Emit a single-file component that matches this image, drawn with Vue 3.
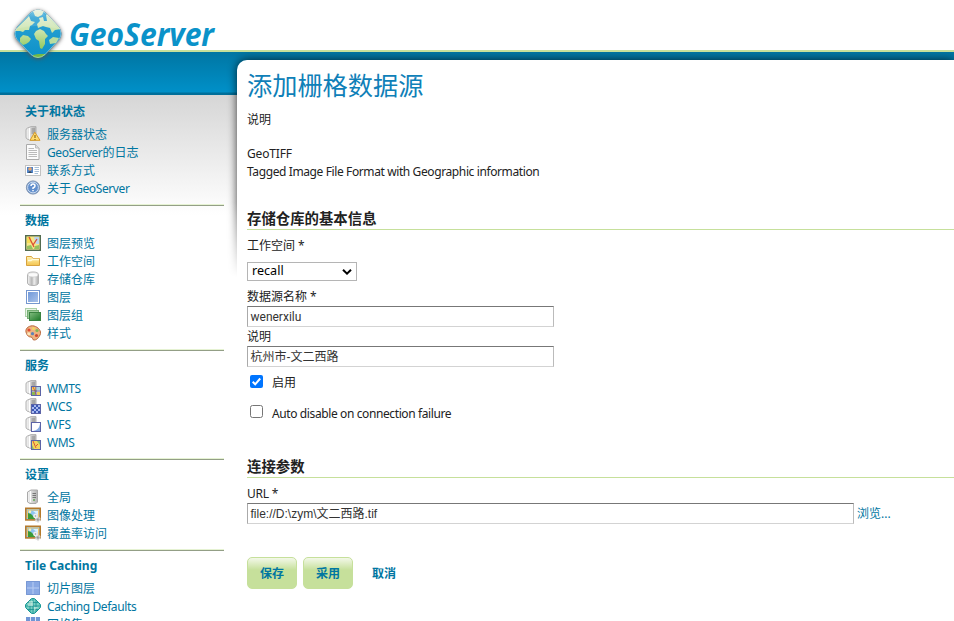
<script setup>
const sections = [
  {
    title: '关于和状态',
    items: [
      { icon: 'status', label: '服务器状态' },
      { icon: 'page', latin: 'GeoServer', label: '的日志' },
      { icon: 'vcard', label: '联系方式' },
      { icon: 'help', label: '关于 ', tail: 'GeoServer' },
    ],
  },
  {
    title: '数据',
    items: [
      { icon: 'map', label: '图层预览' },
      { icon: 'folder', label: '工作空间' },
      { icon: 'database', label: '存储仓库' },
      { icon: 'layer', label: '图层' },
      { icon: 'layers', label: '图层组' },
      { icon: 'palette', label: '样式' },
    ],
  },
  {
    title: '服务',
    items: [
      { icon: 'wmts', latin: 'WMTS' },
      { icon: 'wcs', label: 'WCS' },
      { icon: 'wfs', label: 'WFS' },
      { icon: 'wms', latin: 'WMS' },
    ],
  },
  {
    title: '设置',
    items: [
      { icon: 'server', label: '全局' },
      { icon: 'picture', label: '图像处理' },
      { icon: 'picture', label: '覆盖率访问' },
    ],
  },
  {
    title: 'Tile Caching',
    items: [
      { icon: 'tiles', label: '切片图层' },
      { icon: 'globe', latin: 'Caching Defaults' },
      { icon: 'grid', label: '网格集' },
    ],
  },
]
</script>

<template>
  <div class="page">
    <svg class="defs" width="0" height="0">
      <defs>
        <linearGradient id="gServer" x1="0" x2="1"><stop offset="0" stop-color="#f4f4f4" /><stop offset="1" stop-color="#b4b4b4" /></linearGradient>
        <linearGradient id="gBlue" x1="0" y1="0" x2="1" y2="1"><stop offset="0" stop-color="#7199d9" /><stop offset="1" stop-color="#a9c2ea" /></linearGradient>
        <linearGradient id="gGreen" x1="0" y1="0" x2="1" y2="1"><stop offset="0" stop-color="#82bd80" /><stop offset="1" stop-color="#1c7827" /></linearGradient>
        <linearGradient id="gDb" x1="0" x2="1"><stop offset="0" stop-color="#f8f8f8" /><stop offset=".4" stop-color="#b5b5b5" /><stop offset=".6" stop-color="#eee" /><stop offset="1" stop-color="#aaa" /></linearGradient>
        <linearGradient id="gFolder" x1="0" y1="0" x2="0" y2="1"><stop offset="0" stop-color="#fff3b3" /><stop offset="1" stop-color="#f4c44e" /></linearGradient>
        <linearGradient id="gOcean" x1="0" y1="0" x2="0" y2="1"><stop offset="0" stop-color="#8fd0e8" /><stop offset=".2" stop-color="#2ba1d3" /><stop offset="1" stop-color="#0a90c8" /></linearGradient>
        <linearGradient id="gLand" gradientUnits="userSpaceOnUse" x1="0" y1="10" x2="0" y2="58"><stop offset="0" stop-color="#e6f1dc" /><stop offset=".45" stop-color="#c9e3a9" /><stop offset="1" stop-color="#76bc38" /></linearGradient>
        <clipPath id="logoClip"><path d="M31 12Q38 7 45 12L59 27Q64 34 59 40L45 55Q38 61 31 55L17 40Q12 34 17 27Z" /></clipPath>
        <g id="cabinet">
          <path d="M1 4Q1 2.5 2.5 2L6 .6H11V14.5H6L2 13Q1 12.5 1 11Z" fill="url(#gServer)" stroke="#b0b0b0" />
          <path d="M4.5 2V13.5" stroke="#fff" />
          <path d="M6.5 3H10M6.5 5H10M6.5 7H10" stroke="#8a8a8a" />
        </g>
      </defs>
    </svg>

    <header class="header">
      <svg class="logo" width="225" height="64" viewBox="0 0 225 64">
        <path class="logo-shadow" d="M31 12Q38 7 45 12L59 27Q64 34 59 40L45 55Q38 61 31 55L17 40Q12 34 17 27Z" fill="#666" />
        <g clip-path="url(#logoClip)">
          <rect x="12" y="7" width="52" height="54" fill="url(#gOcean)" />
          <path d="M14 31 29 16 31 21 35 22 32 25 30 26 29 30 25 30 23 32 20 31Z" fill="url(#gLand)" />
          <path d="M33 11 38 9 44 11 42 15 38 17 35 16Z" fill="url(#gLand)" />
          <path d="M20 38 23 35 28 36 31 39 29 42 26 44 23 45 20 42Z" fill="url(#gLand)" />
          <path d="M38 28 37 24 40 21 39 18 43 17 44 21 47 21 46 15 48 14 61 29 55 30 52 33 50 28 46 27 43 26Z" fill="url(#gLand)" />
          <path d="M34 34 36 31 40 29 44 31 46 34 48 36 45 39 45 44 42 49 40 48 39 41 36 39Z" fill="url(#gLand)" />
          <path d="M49 40 53 37 59 38 56 43 50 44Z" fill="#b9dda0" />
          <path d="M33 55 38 54 46 54 40 60 32 60Z" fill="#72b945" />
          <path d="M16 29 34 11Q38 9 42 12L59 29Q36 23 16 29Z" fill="#fff" opacity=".13" />
        </g>
        <path d="M31 12.5Q38 7.5 45 12.5L59 27.5Q63 34 59 39.5L45 54.5Q38 60.5 31 54.5L17 39.5Q13 34 17 27.5Z" fill="none" stroke="#e5f5f8" stroke-width=".7" opacity=".6" />
        <text class="logo-text" x="69" y="46" textLength="145" lengthAdjust="spacingAndGlyphs">GeoServer</text>
      </svg>
    </header>

    <div class="body">
      <aside class="sidebar">
        <nav v-for="s in sections" :key="s.title" class="section">
          <h3>{{ s.title }}</h3>
          <ul>
            <li v-for="i in s.items" :key="i.icon + i.label">
              <svg class="icon" width="16" height="16" viewBox="0 0 16 16" fill="none">
                <template v-if="i.icon === 'status'">
                  <use href="#cabinet" />
                  <path d="M9.8 6.2 15 14.3H5Z" fill="#ffdc70" stroke="#d99b27" stroke-linejoin="round" />
                  <path d="M10 9V12M10 13V14" stroke="#8e6914" stroke-width="1.2" />
                </template>
                <template v-else-if="i.icon === 'page'">
                  <path d="M1.5 .5H10.5L14 4V15.5H1.5Z" fill="#fbfbfb" stroke="#aaa" />
                  <path d="M10.5 .5V4H14" fill="#ddd" stroke="#bbb" />
                  <path d="M3.5 4.5H9M3.5 6.5H12M3.5 8.5H12M3.5 10.5H12M3.5 12.5H12" stroke="#bababa" />
                </template>
                <template v-else-if="i.icon === 'vcard'">
                  <rect x=".5" y="3.5" width="15" height="10" fill="#fff" stroke="#c2c2c2" />
                  <rect x="2" y="5" width="6" height="6" fill="#4e83c9" />
                  <circle cx="5" cy="7" r="1.8" fill="#e6a56e" />
                  <path d="M3 11Q5 7.5 7 11" fill="#345" />
                  <path d="M9.5 5.5H14M9.5 7.5H14M9.5 9.5H14M9.5 11.5H13" stroke="#a6bfd8" />
                </template>
                <template v-else-if="i.icon === 'help'">
                  <circle cx="8" cy="7.5" r="6.6" fill="#628fcd" stroke="#8295b0" />
                  <circle cx="8" cy="7.5" r="5.4" stroke="#d2e0f2" />
                  <path d="M6 6Q6 4 8 4T10 6Q10 7 8 8V9M8 10V11.3" stroke="#fff" stroke-width="1.5" />
                </template>
                <template v-else-if="i.icon === 'map'">
                  <rect x=".7" y=".7" width="14.6" height="14.6" fill="#f6e68a" stroke="#536b50" stroke-width="1.4" />
                  <path d="M2 2H6V8H2Z" fill="#f6dc55" />
                  <path d="M9 2H14V9L11 9Z" fill="#b9d4ef" />
                  <path d="M2 11 6 10 8 14H2ZM10 11 14 10V14H9Z" fill="#95c05f" />
                  <path d="M4 2 9 12M8 10 12 4" stroke="#dc4d35" stroke-width="1.3" />
                </template>
                <template v-else-if="i.icon === 'folder'">
                  <path d="M1.5 12.5V3.5H6.5L8 5.5H14.5V12.5Z" fill="url(#gFolder)" stroke="#d7a23f" />
                  <path d="M3 7.5H6L7.5 6.5H14" stroke="#fffbd9" stroke-width="1.4" />
                </template>
                <template v-else-if="i.icon === 'database'">
                  <path d="M2.5 3.5Q3 1 8 1T13.5 3.5V12Q13 14.5 8 14.5T2.5 12Z" fill="url(#gDb)" stroke="#b2b2b2" />
                  <ellipse cx="8" cy="3.8" rx="5" ry="2.2" fill="#fafafa" stroke="#ccc" stroke-width=".7" />
                </template>
                <template v-else-if="i.icon === 'layer'">
                  <rect x="1.5" y="1.5" width="13" height="13" fill="#fff" stroke="#7597cf" />
                  <rect x="3" y="3" width="10" height="10" fill="url(#gBlue)" />
                </template>
                <template v-else-if="i.icon === 'layers'">
                  <rect x=".5" y="1.5" width="11" height="8" fill="#e7f4e5" stroke="#acd1a8" />
                  <rect x="2.5" y="3.5" width="11" height="8" fill="#9bca98" stroke="#75ae74" />
                  <rect x="4.5" y="5.5" width="11" height="8" fill="url(#gGreen)" stroke="#3a8240" />
                </template>
                <template v-else-if="i.icon === 'palette'">
                  <path d="M1 7C0 3 5 0 9 1S17 6 15 10 11 15 9 15 8 12 6 12 2 11 1 7Z" fill="#eeb380" stroke="#b9683c" />
                  <circle cx="4" cy="5" r="1.6" fill="#e24b32" />
                  <circle cx="8.5" cy="3.5" r="1.5" fill="#f5d75f" />
                  <circle cx="12" cy="5.5" r="1.6" fill="#82b855" />
                  <circle cx="3.8" cy="8.7" r="1.5" fill="#fbe8bd" />
                  <circle cx="7.5" cy="8.7" r="1.6" fill="#5d83b7" />
                  <circle cx="11.5" cy="10.5" r="1.6" fill="#cf4931" />
                </template>
                <template v-else-if="['wmts', 'wcs', 'wfs', 'wms'].includes(i.icon)">
                  <use href="#cabinet" />
                  <rect x="6.5" y="6.5" width="9" height="9" fill="#fff" stroke="#5c64a7" />
                  <template v-if="i.icon === 'wmts'">
                    <path d="M7 7H11V11H7ZM12 12H15V15H12Z" fill="#efd35c" />
                    <path d="M12 7H15V10H12Z" fill="#a9d5e4" />
                    <path d="M7 12H10V15H7Z" fill="#8cba52" />
                    <path d="M8 7 10 11 11 15" stroke="#de5b39" />
                    <path d="M11 7V15M7 11H15" stroke="#54588f" />
                  </template>
                  <template v-else-if="i.icon === 'wcs'">
                    <path d="M7 7H15V15H7Z" fill="#a8baf0" />
                    <path d="M7 8H15M7 12H15" stroke="#3c58b4" stroke-width="2" stroke-dasharray="2" />
                    <path d="M9 10H15M9 14H15" stroke="#3c58b4" stroke-width="2" stroke-dasharray="2" />
                  </template>
                  <path v-else-if="i.icon === 'wfs'" d="M15 8V15H8Q14 14 15 8Z" fill="#85aae2" />
                  <template v-else>
                    <path d="M7 7H15V15H7Z" fill="#f5d45c" />
                    <path d="M12 7H15V11ZM7 11 9 15H7Z" fill="#8bbb65" />
                    <path d="M8 7 11 14M11 12 13 10" stroke="#dc5736" />
                  </template>
                </template>
                <template v-else-if="i.icon === 'server'">
                  <path d="M2.5 3 6 1H12.5V13L11 14.5H5L2.5 13Z" fill="url(#gServer)" stroke="#aaa" />
                  <path d="M5.5 2V13" stroke="#fff" />
                  <path d="M7.5 4.5H11M7.5 6.5H11M7.5 8.5H11" stroke="#777" />
                  <path d="M9 10V12" stroke="#62a957" stroke-width="1.5" />
                </template>
                <template v-else-if="i.icon === 'picture'">
                  <rect x=".8" y="1.3" width="14.4" height="11.6" fill="#8fc5ef" stroke="#b57a2c" stroke-width="1.6" />
                  <path d="M2.5 11V3H13.5V11" stroke="#edc66d" />
                  <path d="M3 6 6 7 10 11V12H3Z" fill="#3a9b38" />
                  <path d="M8 4H13V8Z" fill="#d8f0ff" />
                  <circle cx="5" cy="4.8" r="1.2" fill="#fff3ae" />
                  <circle cx="12.8" cy="12.5" r="2" fill="#999" stroke="#d5d5d5" stroke-width="2" stroke-dasharray="1.4 .5" />
                  <circle cx="10.5" cy="9" r="1.6" fill="#999" stroke="#eee" stroke-width="1.6" />
                </template>
                <template v-else-if="i.icon === 'tiles'">
                  <rect x="1" y="1" width="14" height="14" fill="#89a9e4" />
                  <path d="M8 1V15M1 8H15" stroke="#b8cdf3" />
                  <path d="M1.5 1.5H14.5V14.5H1.5Z" stroke="#7898d4" />
                </template>
                <template v-else-if="i.icon === 'globe'">
                  <path d="M6 1Q8-.5 10 1L15 6Q16.5 8 15 10L10 15Q8 16.5 6 15L1 10Q-.5 8 1 6Z" fill="#75cfc2" stroke="#149693" />
                  <path d="M8 1V15M1 8H15M3 4.5H13M3 11.5H13M5 2V14M11 2V14" stroke="#178e8f" stroke-width=".8" />
                  <path d="M4 3H8V8H3ZM9 9H13L9 13Z" fill="#ddf4e8" opacity=".6" />
                </template>
                <template v-else>
                  <rect x="1" y="1" width="14" height="14" fill="#7095d5" />
                  <path d="M5.5 1V15M10.5 1V15M1 5.5H15M1 10.5H15" stroke="#dce7fb" />
                </template>
              </svg>
              <a><span v-if="i.latin" class="tight">{{ i.latin }}</span>{{ i.label }}<span v-if="i.tail" class="tight">{{ i.tail }}</span></a>
            </li>
          </ul>
        </nav>
      </aside>

      <main class="main">
        <div class="shade"><div class="shade-box"></div></div>
        <div class="content">
          <h1>添加栅格数据源</h1>
          <p class="desc">说明</p>
          <p class="type">GeoTIFF</p>
          <p class="tight">Tagged Image File Format with Geographic information</p>

          <h2 class="basic">存储仓库的基本信息</h2>
          <label class="lbl workspace">工作空间 *</label>
          <div class="select"><span>recall</span>
            <svg width="12" height="8" viewBox="0 0 12 8"><path d="M2 1.8 6 5.6 10 1.8" fill="none" stroke="#000" stroke-width="2" /></svg>
          </div>
          <label class="lbl name">数据源名称 *</label>
          <div class="input latin">wenerxilu</div>
          <label class="lbl note">说明</label>
          <div class="input cjk">杭州市-文二西路</div>
          <div class="check enabled">
            <svg width="13" height="13" viewBox="0 0 13 13"><rect width="13" height="13" rx="2" fill="#0075ff" /><path d="M2.7 6.8 5.2 9.3 10.2 3.5" fill="none" stroke="#fff" stroke-width="2" /></svg>
            <span>启用</span>
          </div>
          <div class="check auto">
            <svg width="13" height="13" viewBox="0 0 13 13"><rect x=".5" y=".5" width="12" height="12" rx="2" fill="#fff" stroke="#767676" /></svg>
            <span class="tight">Auto disable on connection failure</span>
          </div>

          <h2 class="conn">连接参数</h2>
          <label class="lbl url">URL *</label>
          <div class="url-row">
            <div class="input wide cjk">file://D:\zym\文二西路.tif</div>
            <a>浏览...</a>
          </div>
          <div class="actions">
            <a class="btn">保存</a>
            <a class="btn">采用</a>
            <a class="cancel">取消</a>
          </div>
        </div>
      </main>
    </div>
  </div>
</template>

<style>
body { overflow: hidden; background: #fff; }
</style>

<style scoped>
* { box-sizing: border-box; margin: 0; padding: 0; }
.page { width: 954px; height: 621px; overflow: hidden; background: #fff; color: #222; font: 12px/18px "Noto Sans", "Noto Sans CJK SC", sans-serif; }
.defs { position: absolute; }
.tight { letter-spacing: -.39px; }
.header { position: relative; z-index: 3; height: 52px; border-bottom: 2px solid #c6e09b; }
.logo { display: block; }
.logo-shadow { filter: drop-shadow(0 1px 2px #555); }
.logo-text { font: italic bold 32px "Open Sans", "Noto Sans", sans-serif; fill: #0a92c9; }
.body { display: flex; height: 569px; background: linear-gradient(#0076a3, #0090c8 40px, #006f9a 41px, #006f9a 43px, transparent 43px), linear-gradient(#d6d6d6 43px, #fff 163px); }
.sidebar { width: 237px; flex: none; padding: 46px 13px 0 20px; }
.section { padding: 5px 0 7px; border-bottom: 1px solid #939f86; box-shadow: inset 0 -1px #e5f2d2; margin-bottom: 1px; }
.section h3 { padding-left: 5px; margin-bottom: 5px; font-size: 12px; line-height: 18px; color: #0076a1; font-weight: bold; }
.section ul { list-style: none; }
.section li { display: flex; align-items: center; height: 18px; padding-left: 5px; gap: 6px; white-space: nowrap; }
.section li a { white-space: pre; }
.section a, .url-row a { color: #0076a1; }
.icon { flex: none; margin-top: -3px; }
.main { position: relative; flex: 1; min-width: 0; padding-top: 8px; }
.shade { position: absolute; left: -14px; top: 0; right: 0; height: 225px; overflow: hidden; mask-image: linear-gradient(#000 150px, transparent); }
.shade-box { margin: 8px 0 0 14px; height: 300px; border-radius: 10px 0 0; box-shadow: 0 0 10px rgba(0, 0, 0, .75); }
.content { position: relative; height: 561px; padding: 8px 0 0 10px; background: #fff; border-radius: 10px 0 0; }
h1 { height: 36px; font-size: 25.2px; line-height: 35px; font-weight: 400; color: #0f80b8; }
.desc { margin-top: 7px; }
.type { margin-top: 16px; letter-spacing: -.15px; }
h2 { font-size: 14.4px; line-height: 21px; height: 22px; border-bottom: 1px solid #c6e09b; font-weight: bold; }
.basic { margin-top: 27px; }
.lbl { display: block; height: 18px; }
.workspace { margin-top: 7px; }
.select { display: flex; align-items: center; justify-content: space-between; width: 110px; height: 19px; margin-top: 7px; padding: 0 3px 0 4px; border: 1px solid #b5b5b5; color: #000; font-size: 12.6px; }
.select span { margin-top: -1px; }
.name { margin-top: 7px; }
.input { width: 307px; height: 21px; padding: 0 2.5px; border: 1px solid #d3d3d3; border-top-color: #777; border-left-color: #aaa; border-right-color: #bbb; font: 12px/19px "Liberation Sans", "Noto Sans CJK SC", sans-serif; color: #333; }
.latin { font-family: Roboto, sans-serif; line-height: 20px; }
.cjk { line-height: 20px; }
.note { height: 19px; line-height: 19px; }
.check { display: flex; align-items: center; gap: 9px; height: 18px; padding-left: 3px; }
.check svg { flex: none; margin-top: -3px; }
.enabled { margin-top: 7px; }
.auto { margin-top: 12px; }
.auto span { margin-top: 2px; }
.conn { margin-top: 34px; }
.url { margin-top: 7px; letter-spacing: -.2px; }
.url-row { display: flex; align-items: center; gap: 3px; }
.wide { width: 607px; }
.actions { display: flex; align-items: center; gap: 6px; margin-top: 33px; font-weight: bold; color: #0076a1; }
.btn { width: 50px; height: 32px; border: 1px solid #c6e09b; border-radius: 5px; text-align: center; line-height: 31px; background: linear-gradient(#f3f8e9, #c6e09b 12px); }
.cancel { margin: 1px 0 0 13px; }
</style>
